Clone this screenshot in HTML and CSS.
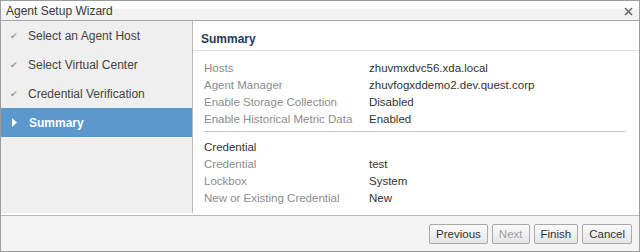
FILE: index.html
```html
<!DOCTYPE html>
<html lang="en">
<head>
  <meta charset="UTF-8">
  <title>Agent Setup Wizard</title>
  <link rel="stylesheet" href="styles.css">
</head>
<body>
  <!-- Окно мастера -->
  <div class="window">
    <div class="titlebar">
      <span class="title">Agent Setup Wizard</span>
      <svg class="close" width="9" height="9" viewBox="0 0 9 9">
        <path d="M1 1 L8 8 M8 1 L1 8" stroke="#6b6b6b" stroke-width="1.6"/>
      </svg>
    </div>

    <div class="main">
      <!-- Шаги мастера -->
      <ul class="steps">
        <li class="step done"><span class="mark">&#10004;</span>Select an Agent Host</li>
        <li class="step done"><span class="mark">&#10004;</span>Select Virtual Center</li>
        <li class="step done"><span class="mark">&#10004;</span>Credential Verification</li>
        <li class="step active">
          <svg class="mark" width="8" height="9" viewBox="0 0 8 9"><path d="M1 0 L6 4.5 L1 9 Z" fill="#fff"/></svg>Summary
        </li>
      </ul>

      <!-- Итоговая информация -->
      <div class="content">
        <div class="content-header">Summary</div>
        <div class="summary">
          <div class="row"><span class="label">Hosts</span><span class="value">zhuvmxdvc56.xda.local</span></div>
          <div class="row"><span class="label">Agent Manager</span><span class="value">zhuvfogxddemo2.dev.quest.corp</span></div>
          <div class="row"><span class="label">Enable Storage Collection</span><span class="value">Disabled</span></div>
          <div class="row"><span class="label">Enable Historical Metric Data</span><span class="value">Enabled</span></div>
          <div class="divider"></div>
          <div class="row"><span class="group">Credential</span></div>
          <div class="row"><span class="label">Credential</span><span class="value">test</span></div>
          <div class="row"><span class="label">Lockbox</span><span class="value">System</span></div>
          <div class="row"><span class="label">New or Existing Credential</span><span class="value">New</span></div>
        </div>
      </div>
    </div>

    <!-- Кнопки -->
    <div class="footer">
      <button class="btn">Previous</button>
      <button class="btn" disabled>Next</button>
      <button class="btn">Finish</button>
      <button class="btn">Cancel</button>
    </div>
  </div>
</body>
</html>
```

FILE: styles.css
```css
/* Общие стили */
body {
  margin: 0;
  font-family: "Liberation Sans", Arial, sans-serif;
  font-size: 11.5px;
  color: #333;
  background: #fff;
}

/* Окно */
.window {
  width: 640px;
  height: 252px;
  box-sizing: border-box;
  border: 1px solid #9c9c9c;
  display: flex;
  flex-direction: column;
}

/* Заголовок окна */
.titlebar {
  height: 19px;
  border-bottom: 1px solid #a6a6a6;
  background: linear-gradient(#ffffff 0, #ffffff 35%, #f2f2f2 45%, #f2f2f2 100%);
  display: flex;
  align-items: center;
  justify-content: space-between;
  padding: 0 6px 0 5px;
}

.title {
  color: #3a3a3a;
  font-size: 12px;
  padding-top: 1px;
}

.close {
  margin-top: 2px;
}

/* Основная часть */
.main {
  height: 192px;
  display: flex;
  margin-bottom: 2px;
}

/* Шаги */
.steps {
  list-style: none;
  margin: 0;
  padding: 0;
  width: 191px;
  background: #efefef;
  border-right: 1px solid #b9b9b9;
}

.step {
  height: 29px;
  display: flex;
  align-items: center;
  padding-left: 9px;
  color: #444;
  font-size: 12px;
}

.mark {
  width: 18px;
  flex: none;
}

.done .mark {
  color: #a0a0a0;
  font-size: 9px;
}

.active {
  background: #5b98cc;
  color: #fff;
  font-weight: bold;
}

.active .mark {
  width: 8px;
  padding-right: 10px;
  margin-left: 1px;
}

/* Контент */
.content {
  flex: 1;
}

.content-header {
  height: 30px;
  box-sizing: border-box;
  padding: 11px 0 0 8px;
  border-bottom: 1px solid #dedede;
  font-weight: bold;
  font-size: 12px;
  color: #1f3a5c;
}

.summary {
  padding: 8px 13px 0 11px;
}

.row {
  height: 17px;
  display: flex;
  align-items: center;
}

.label {
  width: 165px;
  color: #8c8c8c;
}

.value {
  color: #333;
}

.group {
  color: #333;
}

.divider {
  border-top: 1px solid #c8c8c8;
  margin: 4px 0 6px;
}

/* Нижняя панель */
.footer {
  flex: 1;
  border-top: 1px solid #b9b9b9;
  background: #f4f4f4;
  display: flex;
  justify-content: flex-end;
  align-items: flex-start;
  gap: 4px;
  padding: 8px 7px 0 0;
}

.btn {
  height: 20px;
  padding: 0 6px;
  font-family: inherit;
  font-size: 11.5px;
  color: #333;
  border: 1px solid #a9a9a9;
  border-radius: 2px;
  background: linear-gradient(#fbfbfb, #e5e5e5);
}

.btn:disabled {
  color: #a0a0a0;
}
```
